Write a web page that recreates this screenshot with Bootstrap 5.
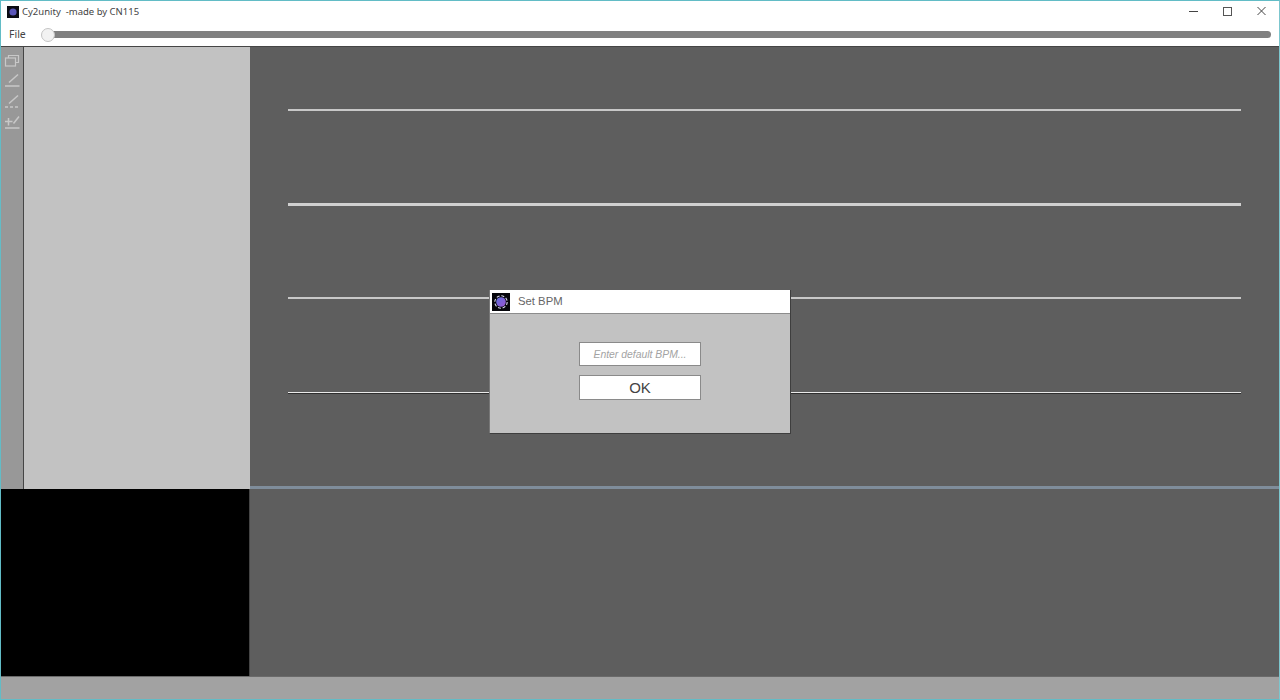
<!DOCTYPE html>
<html lang="en">
<head>
  <meta charset="UTF-8" />
  <title>Cy2unity -made by CN115</title>
  <link href="https://cdn.jsdelivr.net/npm/bootstrap@5.3.3/dist/css/bootstrap.min.css" rel="stylesheet">
  <style>
    html, body { height: 700px; overflow: hidden; }
    body { background: #5e5e5e; font-family: "Liberation Sans", Arial, sans-serif; }

    .app-window { width: 1280px; height: 700px; border: 1px solid #62bcc6; border-right-color: #7cc6ce; background: #fff; }

    .title-row { height: 22px; background: #fff; }
    .title-icon { margin-left: 6px; }
    .title-text { font-family: "Noto Sans", "Open Sans", sans-serif; font-size: 9.5px; color: #444; margin-left: 3px; white-space: pre; }
    .win-btn { width: 34px; height: 20px; }

    .menu-row { height: 23px; background: #fff; }
    .menu-file { font-family: "Noto Sans", sans-serif; font-size: 10.5px; color: #444; margin-left: 8px; width: 32px; }
    .seek-wrap { width: 1230px; height: 14px; }
    .seek-track { left: 6px; right: 0; top: 3.5px; height: 7px; background: #808080; border-radius: 4px; }
    .seek-knob { left: 0; top: 0; width: 14px; height: 14px; border-radius: 50%; background: #f2f2f2; border: 1px solid #c4c4c4; }

    .main-top { height: 443px; border-top: 1px solid #454545; }
    .tool-strip { width: 23px; background: #989898; border-right: 1px solid #454545; padding-top: 2px; gap: 2.6px; }
    .tool-item { width: 22px; height: 18px; }
    .side-panel { width: 226px; background: #c2c2c2; }
    .score-area { background: #5e5e5e; padding: 62px 38px 0 38px; gap: 92px; }
    .score-line { height: 2px; background: #c8c8c8; }
    .score-line.thick { background: #d0d0d0; height: 3px; margin-bottom: -1px; }
    .score-line.dark { background: #eaeaea; box-shadow: 0 1px 0 #2e2e2e; height: 1px; margin-top: 1px; }

    .main-bottom { height: 187px; }
    .black-box { width: 249px; background: #000; border-right: 1px solid #454545; }
    .timeline { background: #5e5e5e; border-top: 3px solid #7f8d9b; margin-top: -3px; position: relative; }

    .status-row { height: 24px; background: #a2a2a2; border-top: 1px solid #6a6a6a; }

    .bpm-dialog { left: 488px; top: 289px; width: 302px; height: 144px; background: #c2c2c2; border: 1px solid #3e3e3e; border-top: 0; border-left-color: #777; z-index: 5; }
    .bpm-head { height: 24px; background: #fff; border-bottom: 1px solid #8c8c8c; padding-left: 2px; }
    .bpm-title { font-size: 11.3px; color: #666; margin-left: 8px; }
    .bpm-body { padding-top: 28px; gap: 9px; }
    .bpm-input, .bpm-ok { width: 122px; background: #fff; border: 1px solid #8a8a8a; border-radius: 0; padding: 0; text-align: center; }
    .bpm-input { height: 24px; min-height: 24px; font-size: 10.4px; font-style: italic; color: #555; }
    .bpm-input::placeholder { color: #a3a3a3; opacity: 1; }
    .bpm-ok { height: 25px; font-size: 15px; color: #444; line-height: 1; }
    .bpm-ok:hover { background: #fff; color: #444; border-color: #8a8a8a; }
  </style>
</head>
<body>
  <div class="app-window d-flex flex-column position-relative">

    <!-- title bar -->
    <div class="title-row d-flex align-items-center flex-shrink-0">
      <svg class="title-icon" width="12" height="12" viewBox="0 0 12 12">
        <rect width="12" height="12" fill="#0b0b12"/>
        <circle cx="6" cy="6" r="3.6" fill="#5a55b8"/>
      </svg>
      <span class="title-text">Cy2unity  -made by CN115</span>
      <div class="d-flex ms-auto align-self-start">
        <div class="win-btn d-flex align-items-center justify-content-center">
          <svg width="10" height="10" viewBox="0 0 10 10"><path d="M0 5.5H9" stroke="#444" fill="none"/></svg>
        </div>
        <div class="win-btn d-flex align-items-center justify-content-center">
          <svg width="10" height="10" viewBox="0 0 10 10"><rect x="0.5" y="1.5" width="8" height="8" stroke="#555" fill="none"/></svg>
        </div>
        <div class="win-btn d-flex align-items-center justify-content-center">
          <svg width="10" height="10" viewBox="0 0 10 10"><path d="M0.5 1L8.5 9M8.5 1L0.5 9" stroke="#444" fill="none"/></svg>
        </div>
      </div>
    </div>

    <!-- menu + seek slider -->
    <div class="menu-row d-flex align-items-center flex-shrink-0">
      <span class="menu-file">File</span>
      <div class="seek-wrap position-relative">
        <div class="seek-track position-absolute"></div>
        <div class="seek-knob position-absolute"></div>
      </div>
    </div>

    <!-- editor -->
    <div class="main-top d-flex flex-shrink-0">
      <div class="tool-strip d-flex flex-column align-items-center flex-shrink-0">
        <div class="tool-item">
          <svg width="22" height="18" viewBox="0 0 22 18" fill="none" stroke="#c8c8c8" stroke-width="1.2">
            <path d="M7.5 5V2.5H17.5V9.5H14.5"/><rect x="4.5" y="5" width="10" height="8"/>
          </svg>
        </div>
        <div class="tool-item">
          <svg width="22" height="18" viewBox="0 0 22 18" fill="none" stroke="#c8c8c8" stroke-width="1.5">
            <path d="M8 9.5L17 1.5"/><path d="M4 13H18.5"/>
          </svg>
        </div>
        <div class="tool-item">
          <svg width="22" height="18" viewBox="0 0 22 18" fill="none" stroke="#c8c8c8" stroke-width="1.5">
            <path d="M8 9.5L17 1.5"/><path d="M4 13H18.5" stroke-dasharray="3 2"/>
          </svg>
        </div>
        <div class="tool-item">
          <svg width="22" height="18" viewBox="0 0 22 18" fill="none" stroke="#c8c8c8" stroke-width="1.5">
            <path d="M4 6.5H11.5M7.5 3V10.5"/><path d="M12.5 8.5L18 1.5"/><path d="M4 13H18.5"/>
          </svg>
        </div>
      </div>
      <div class="side-panel flex-shrink-0"></div>
      <div class="score-area flex-grow-1 d-flex flex-column">
        <div class="score-line"></div>
        <div class="score-line thick"></div>
        <div class="score-line"></div>
        <div class="score-line dark"></div>
      </div>
    </div>

    <div class="main-bottom d-flex flex-shrink-0">
      <div class="black-box flex-shrink-0"></div>
      <div class="timeline flex-grow-1"></div>
    </div>

    <div class="status-row flex-grow-1"></div>

    <!-- Set BPM dialog -->
    <div class="bpm-dialog position-absolute d-flex flex-column">
      <div class="bpm-head d-flex align-items-center">
        <svg width="18" height="18" viewBox="0 0 18 18">
          <defs>
            <linearGradient id="bpmGrad" x1="0" y1="0" x2="1" y2="1">
              <stop offset="0" stop-color="#5f6ee0"/>
              <stop offset="1" stop-color="#9a55d0"/>
            </linearGradient>
          </defs>
          <rect width="18" height="18" fill="#05050a"/>
          <circle cx="9" cy="9" r="6.2" fill="none" stroke="#d8d8ee" stroke-width="1.1" stroke-dasharray="3 1.8"/>
          <circle cx="9" cy="9" r="4.8" fill="url(#bpmGrad)"/>
        </svg>
        <span class="bpm-title">Set BPM</span>
      </div>
      <div class="bpm-body d-flex flex-column align-items-center">
        <input class="bpm-input form-control" type="text" placeholder="Enter default BPM...">
        <button class="bpm-ok btn" type="button">OK</button>
      </div>
    </div>
  </div>
</body>
</html>
